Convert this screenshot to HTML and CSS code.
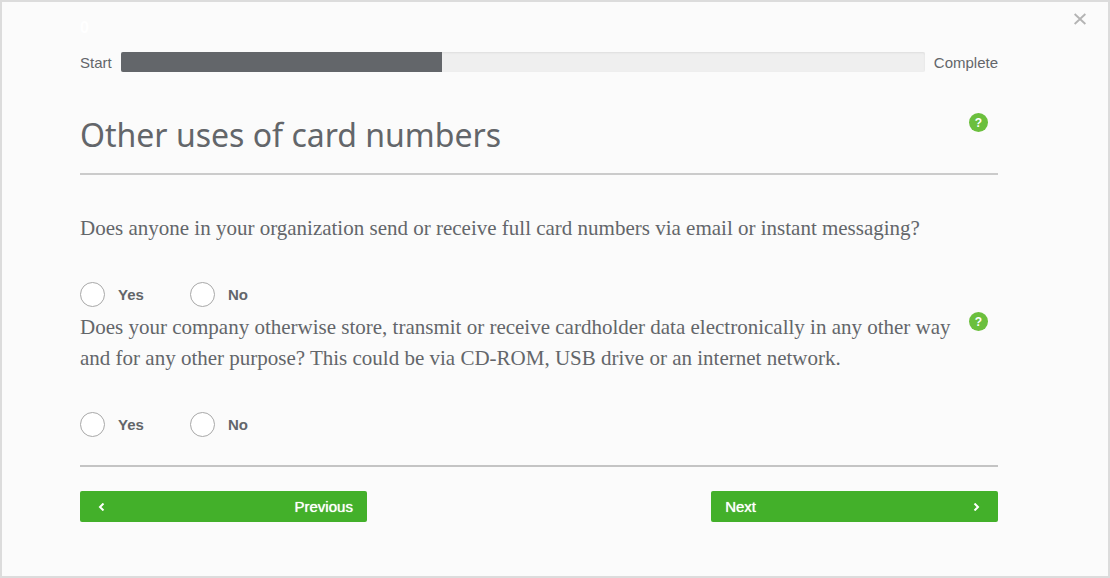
FILE: index.html
```html
<!DOCTYPE html>
<html lang="en">
<head>
<meta charset="utf-8">
<meta name="viewport" content="width=device-width, initial-scale=1">
<title>Other uses of card numbers</title>
<link rel="stylesheet" href="styles.css">
</head>
<body>
<main class="dialog">
  <button class="close" type="button" aria-label="Close">
    <svg width="12" height="12" viewBox="0 0 12 12"><path d="M0.6 1 11.4 11M11.4 1 0.6 11" fill="none" stroke="currentColor" stroke-width="2"/></svg>
  </button>
  <span class="step">0</span>
  <div class="progress">
    <span>Start</span>
    <div class="track" role="progressbar" aria-label="Progress" aria-valuemin="0" aria-valuemax="100" aria-valuenow="40"><div class="fill" style="width:40%"></div></div>
    <span>Complete</span>
  </div>
  <header class="heading">
    <h1>Other uses of card numbers</h1>
    <button class="help" type="button" aria-label="Help">?</button>
  </header>
  <form class="form">
    <section class="question">
      <div class="prompt">
        <p id="q1">Does anyone in your organization send or receive full card numbers via email or instant messaging?</p>
      </div>
      <div class="answers" role="radiogroup" aria-labelledby="q1">
        <label class="answer"><input type="radio" name="email" value="yes">Yes</label>
        <label class="answer"><input type="radio" name="email" value="no">No</label>
      </div>
    </section>
    <section class="question">
      <div class="prompt">
        <p id="q2">Does your company otherwise store, transmit or receive cardholder data electronically in any other way and for any other purpose? This could be via CD-ROM, USB drive or an internet network.</p>
        <button class="help" type="button" aria-label="Help">?</button>
      </div>
      <div class="answers" role="radiogroup" aria-labelledby="q2">
        <label class="answer"><input type="radio" name="other" value="yes">Yes</label>
        <label class="answer"><input type="radio" name="other" value="no">No</label>
      </div>
    </section>
    <footer class="actions">
      <button class="nav previous" type="button">
        <svg width="7" height="8" viewBox="0 0 7 8"><path d="M5.5 .5 2 4 5.5 7.5" fill="none" stroke="currentColor" stroke-width="2"/></svg>
        Previous
      </button>
      <button class="nav next" type="button">
        Next
        <svg width="7" height="8" viewBox="0 0 7 8"><path d="M1.5 .5 5 4 1.5 7.5" fill="none" stroke="currentColor" stroke-width="2"/></svg>
      </button>
    </footer>
  </form>
</main>
</body>
</html>
```
FILE: styles.css
```css
* {
  box-sizing: border-box;
}

body {
  margin: 0;
  background: #fbfbfb;
  color: #63666a;
  font: 15px/20px "Liberation Sans", Arial, sans-serif;
}

button {
  margin: 0;
  padding: 0;
  border: 0;
  font: inherit;
  cursor: pointer;
}

.dialog {
  position: relative;
  min-height: 100vh;
  padding: 16px 110px 40px 78px;
  border: 2px solid #dcdcdc;
}

.close {
  position: absolute;
  top: 11px;
  right: 22px;
  display: flex;
  background: none;
  color: #b4b4b4;
}

.step {
  display: block;
  height: 34px;
  color: #fff;
  font-size: 16px;
  font-weight: 700;
}

.progress {
  display: flex;
  gap: 9px;
  line-height: 22px;
}

.track {
  flex: 1;
  height: 20px;
  overflow: hidden;
  border-radius: 2px;
  background: #efefef;
  box-shadow: inset 0 1px 2px #dedede;
}

.fill {
  height: 100%;
  background: #63666a;
}

.heading {
  display: flex;
  justify-content: space-between;
  align-items: flex-start;
  margin-top: 30px;
  padding: 9px 10px 16px 0;
  border-bottom: 2px solid #cbcbcb;
}

.heading h1 {
  margin: 0;
  font: 400 32px/44px "Noto Sans", sans-serif;
}

.help {
  flex: none;
  width: 19px;
  height: 19px;
  border-radius: 50%;
  background: #6bbf3d;
  color: #fff;
  font-size: 12px;
  font-weight: 700;
  line-height: 18px;
}

.form {
  padding-top: 38px;
}

.question + .question {
  margin-top: 5px;
}

.prompt {
  display: flex;
  justify-content: space-between;
  align-items: flex-start;
  gap: 10px;
  padding-right: 10px;
}

.prompt p {
  margin: 0;
  font: 21px/31px "Liberation Serif", "Times New Roman", serif;
}

.answers {
  display: flex;
  margin-top: 38px;
}

.answer {
  display: flex;
  align-items: center;
  gap: 13px;
  width: 110px;
  font-weight: 700;
}

.answer input {
  appearance: none;
  width: 25px;
  height: 25px;
  margin: 0;
  border: 1px solid #a8a8a8;
  border-radius: 50%;
  background: #fff;
}

.answer input:checked {
  border: 8px solid #43b02a;
}

.actions {
  display: grid;
  grid-template-columns: 5fr 6fr 5fr;
  margin-top: 28px;
  padding-top: 24px;
  border-top: 2px solid #c4c4c4;
}

.nav {
  display: flex;
  justify-content: space-between;
  align-items: center;
  height: 31px;
  border-radius: 2px;
  background: #43b02a;
  color: #fff;
  text-shadow: 0 0 1px #fff;
}

.previous {
  padding: 0 14px 0 18px;
}

.next {
  grid-column: 3;
  padding: 0 18px 0 14px;
}
```
